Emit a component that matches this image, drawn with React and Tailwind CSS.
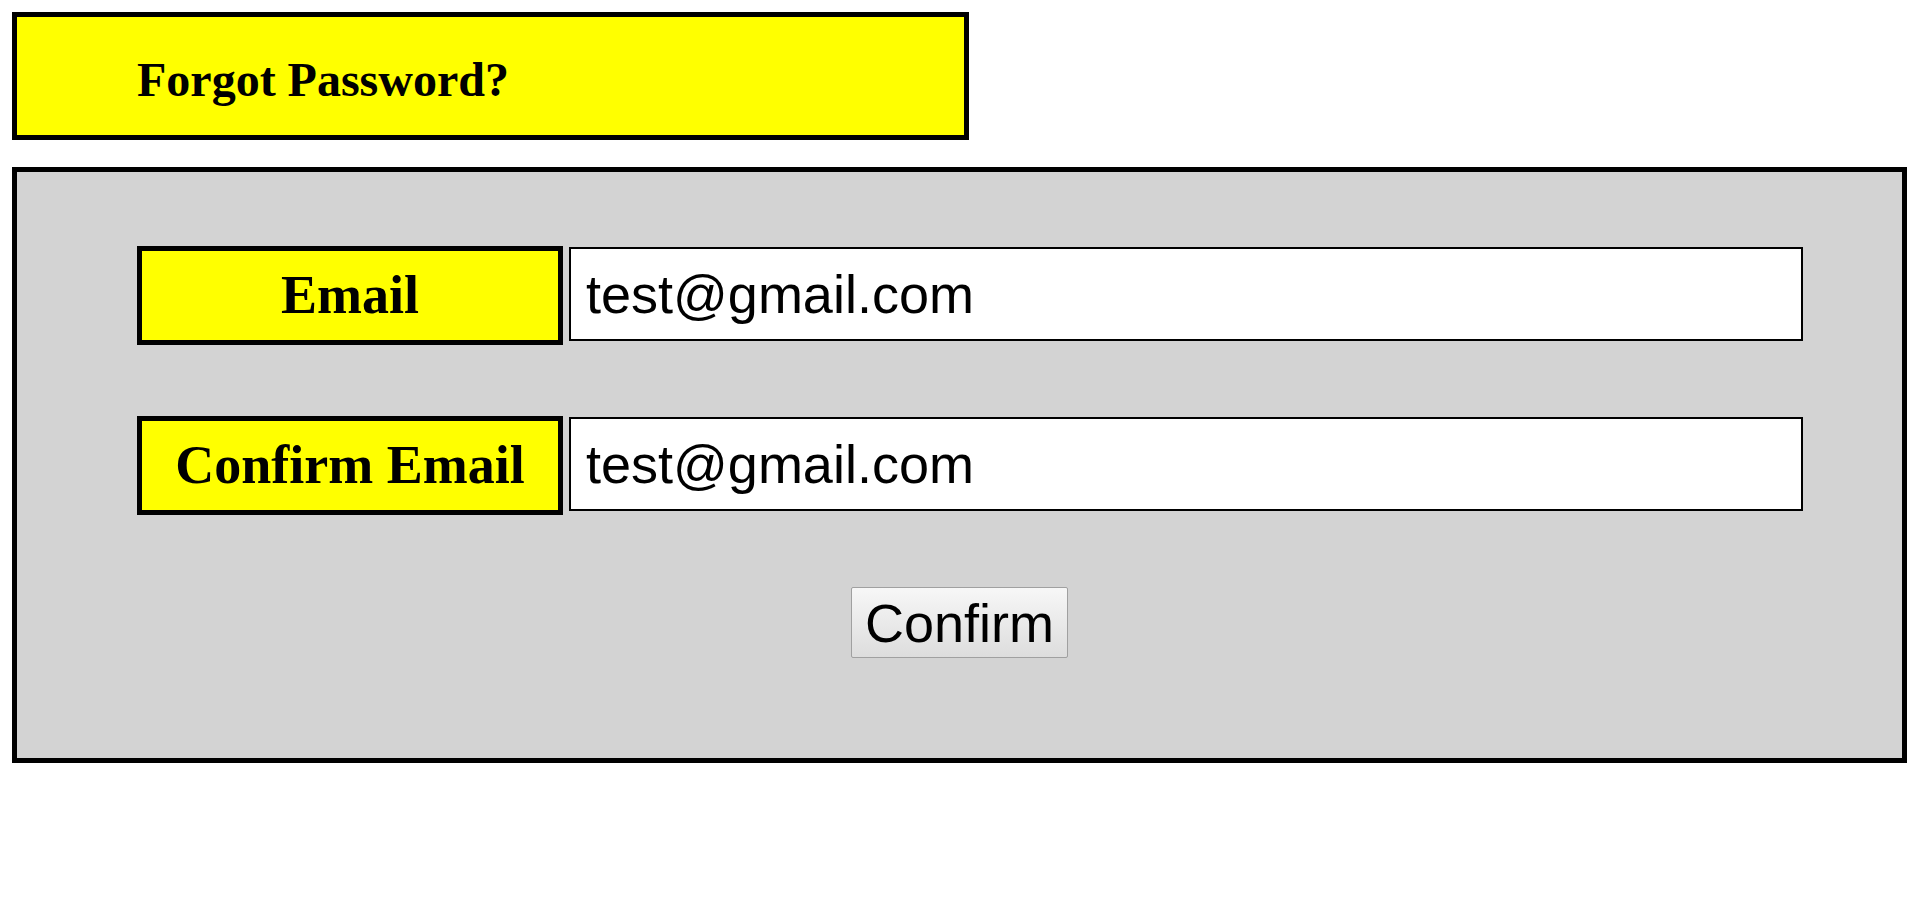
import React, { useState } from 'react';

const Field = ({ label, value, onChange }) => (
  <div className="flex items-start gap-[6px] pl-[120px] pr-[99px]">
    <label className="w-[426px] h-[99px] shrink-0 flex items-center justify-center border-[5px] border-black bg-[#ffff00] text-[54px] font-bold font-['Liberation_Serif',serif] text-black whitespace-nowrap">
      {label}
    </label>
    <input
      type="email"
      value={value}
      onChange={(e) => onChange(e.target.value)}
      className="flex-1 mt-[1px] h-[94px] border-2 border-black bg-white pl-[15px] text-[54px] font-['Liberation_Sans',Arial,sans-serif] text-black outline-none"
    />
  </div>
);

const App = () => {
  const [email, setEmail] = useState('test@gmail.com');
  const [confirmEmail, setConfirmEmail] = useState('test@gmail.com');

  return (
    <div className="min-h-screen bg-white p-[12px] flex flex-col gap-[27px]">
      <div className="w-[957px] h-[128px] border-[5px] border-black bg-[#ffff00] flex items-center pl-[120px] pt-[8px]">
        <h1 className="text-[48px] font-bold font-['Liberation_Serif',serif] text-black">Forgot Password?</h1>
      </div>

      <div className="h-[596px] border-[5px] border-black bg-[#d3d3d3] pt-[74px] flex flex-col">
        <Field label="Email" value={email} onChange={setEmail} />
        <div className="h-[71px]" />
        <Field label="Confirm Email" value={confirmEmail} onChange={setConfirmEmail} />
        <div className="flex justify-center mt-[72px]">
          <button className="h-[71px] px-[13px] border border-[#a0a0a0] rounded-[2px] bg-gradient-to-b from-[#f7f7f7] to-[#dddddd] text-[54px] leading-none font-['Liberation_Sans',Arial,sans-serif] text-black">
            Confirm
          </button>
        </div>
      </div>
    </div>
  );
};

export default App;
